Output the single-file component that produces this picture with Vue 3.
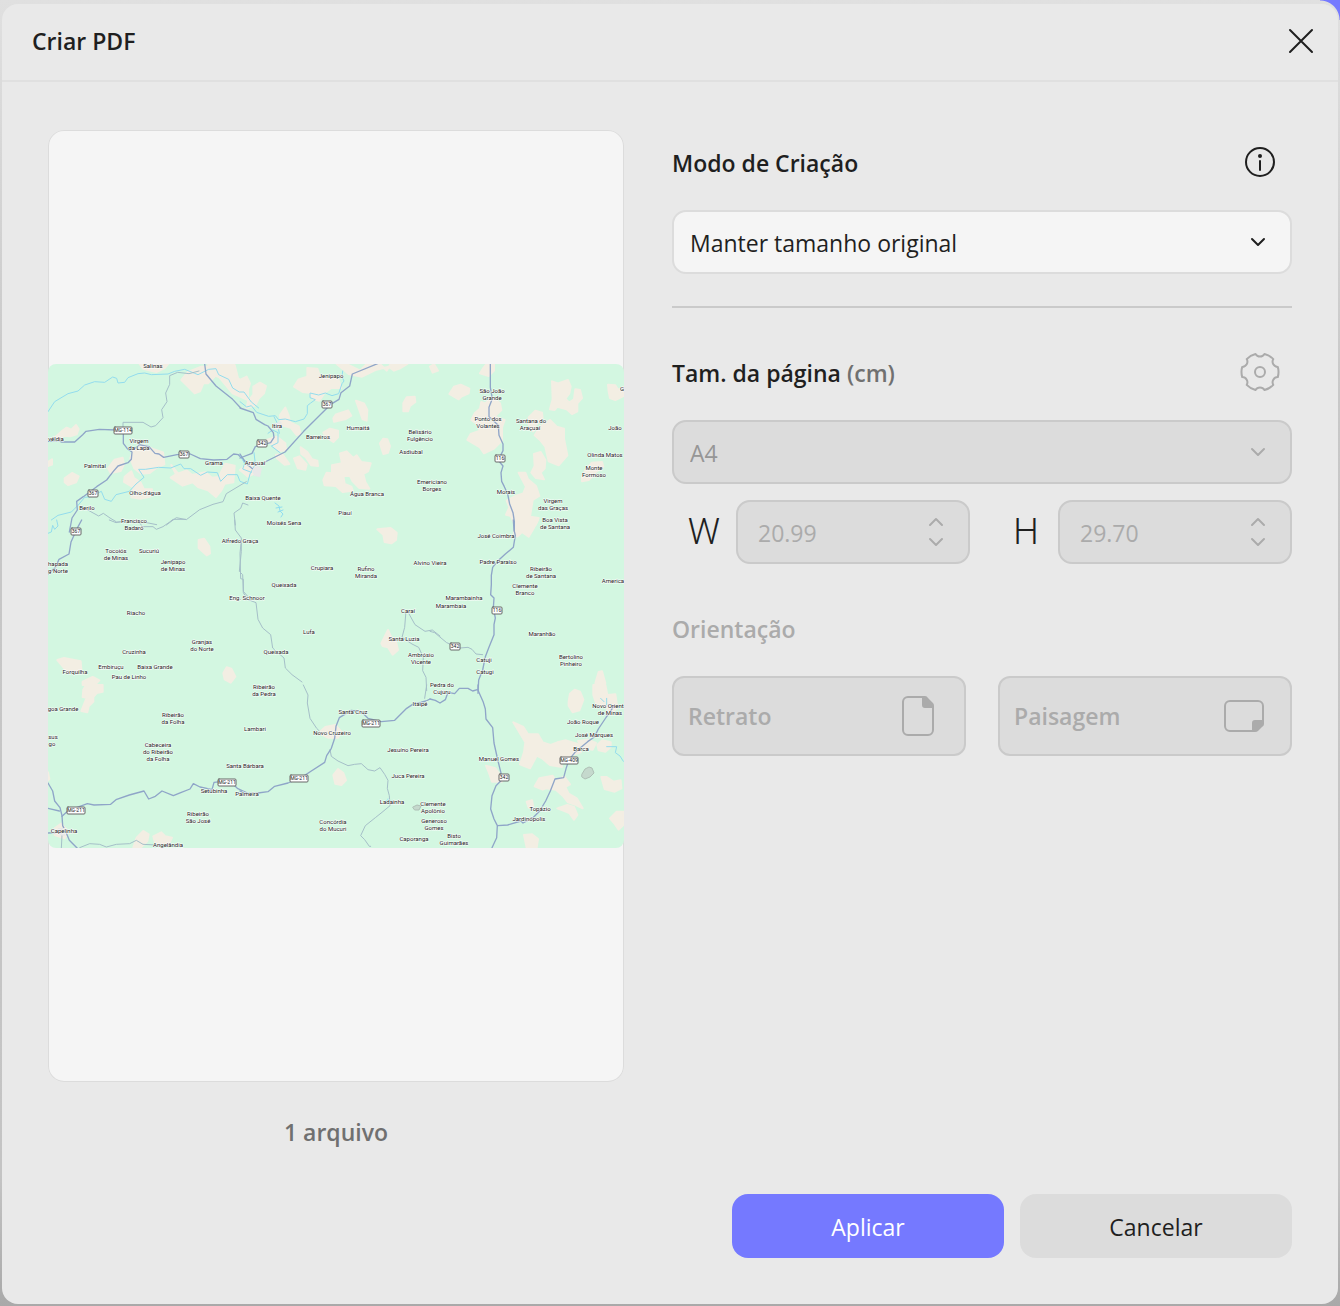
<script setup>
import { ref } from 'vue'

const mode = ref('original')
const pageSize = ref('a4')
const width = ref('20.99')
const height = ref('29.70')

// The map is stored as survey tiles drawn at three units per map pixel.
const tiles = [
  {
    x: 48, y: 360,
    land: [
      'M275 12l10 14 40 10 25-12 10-12z',
      'M400 60l20-24 40-16 20 0 20 30-20 20-14 0-10 24-16 6-20-20z',
      'M480 12l10 30 24 10 40 48 46 20 0-45-30-20-10-40z',
      'M40 215l16-12 14 6 14-14 8 12-6 16-20 6-20-2-10 12-14-8z',
      'M50 355l22-16 20 10-8 18-24 8-10-8z',
      'M255 270l30-15 30 12 30 10 4 36-20 8-24 18-26 2-20-16-12-30z',
      'M180 325l20-26 24-6 4 20-10 20-30 6z',
      'M230 350l20-16 8 20 20 14 10 20 24 0-6 22-30 6-26-4 6-30-28-16z',
      'M370 315l20 26 26-10 16 14 40-8 20 16 20-2 20-40 28 6-4 50-26 4-10 20-16 20-24-20-30-10-16-14-30 10-36-24 16-10z',
      'M0 306l12-8 0 16-12 4z'
    ],
    river: ['M0 155l20-30 40-24 30-8 20-18 30-10 30 2 24-16 12 4 4 14 20-2 10-14 30-12 20-2 20 5 50-2 20-8 30-6 30 12 10 4 32-16 22-2 8 18 30 14 12 26 20 12 14 0 22 30 22 18', 'M10 480l20-14 40-10 20-20 20-24 20-2 30-16 10 24 20 6 14-20 40-10 20-22 24-20-16-24 20 0 40-6 36 2 30-12 10 14 20 0 30 20 20-10 30 2 10 26 20-20 30 0 8 20 22 8 8-30 16-30-4-34'],
    road: ['M0 244l30-2 10 4 40 0 24-22 10-10 40-6 50 2 22 0 0 40 12 16 14 10-2 22-10 10-30 10-14 16-20 26-30 20-40 30-20 14 2 26-16 24-8 42', 'M245 262l20 2 8-10 30 6 18 20 12 2 14 10 40-8 40-2 30 14 40 4 40-2 20-16 14 2 20 20', 'M470 12l4 30 30 36 50 40 24 26'],
    minor: ['M225 205l0-18 60 0 24 14 14-4 22-24-4-24 16-24-4-26 12-26 0-26 24-10 34 4 30-8', 'M112 446l40 22 14-8 20 14 20 12 80 0 40 8', 'M355 495l30-22 30 6 40-30 40-16 30-8 10-24 60-36', 'M600 435l-16-6-6 16-20 14 4 36']
  },
  {
    x: 240, y: 360,
    land: [
      'M0 60l20-10 10 20-10 30-20 8z',
      'M40 80l20-12 18 10-6 22-16 16-10 20-26 8 4-20 16-20z',
      'M162 80l14-22 26-8 0-26 30 2 8 24 30 0 24 4 10 30-30 0-20 14-16 24-18-4-12-20-20-2z',
      'M280 175l8-12 36-12 10 16-16 10-36 8z',
      'M348 122l24 8 10 20-2 32-12-4-8-22z',
      'M490 130l10-18 24-2 2 16-16 12-6 16-14 0z',
      'M120 165l16-22 10 24 4 20 26 12 6 22-12 4-18-22-30-8z',
      'M250 218l20-12 24 6 0 20-14 14-20-14z',
      'M420 250l10-14 12 2 8 20-6 20-14 4z',
      'M182 262l20 14 14 22 16 4 2 16-20-2-16-24-14-10z',
      'M162 295l16-6 22 24-4 16-22-4z',
      'M250 360l10-22 16 2 0-24 30-6-6-30 20-6 20 20 10-8 14 20 28 4-8 24-14 8 6 24 12 20-30-2-20-20-8-16-20 0 4 24 20 8 4 12-30 4-20-18-34-2z',
      'M0 330l30-24 22 10-8 24-20 10z',
      'M108 284l20 0 20 28-14 2-24-20z',
      'M80 240l30-10 26 20 2 20-20 4z',
      'M290 12l30 0 40 20 20-20 40 0 20 20 12-20 50 0-20 12-20 8-16-12-40 10-40 20-40-8z'
    ],
    river: ['M0 125l20 16 14-4 16 20 36 12 20-2 10 12 20-2 30 8 26-8 10-16 0-24 10-8 14-10-16-6 0-14 26 6 20-6 20 8 20-6 10-30 6-8-6-12 2-18', 'M0 285l14 26-6 16 26 10M84 220l14-10 16 8 0 30-20 10 26 20M102 170l10 20 6 30'],
    road: ['M0 144l40 14 8 20 26 16 10 4 16 20 2 14-10 16-46 12-10 20-36 14', 'M75 306l60-30 56-62 80-80 26-16 6-20 26-20 8-36 78-32', 'M0 282l20 30 22 18']
  },
  {
    x: 430, y: 360,
    land: [
      'M58 102l14-22 20-6 26 12-2 14-22 10-8 8z',
      'M150 40l10-16 10-12 22 0 0 20-16 16z',
      'M166 130l20-20 24 20 4 20-20 20 30 10-8 22 0 40-24 24-30 14-12-18-38-22 10-18 28-10-10-20-16-12 10-20 16-14 4-20z',
      'M0 20l12-8 12 20-16 6z',
      'M366 64l18 6 30-10 8 20-4 20-12 16 12 12 14-10 4-30 14 2 6 24-14 16 0 24-16 8-16-14-28-8-8 10-14-2 8-30z',
      'M534 74l22 2 8 14 16-8 0 26-24 12-16-6-4-20z',
      'M296 172l20-20 20 6 2 20-20 16-8 20-14-20z',
      'M330 200l30-20 20 20 22 6 0 30 10 50-26 30-30-12-10-44-16-20-16-14z',
      'M312 282l20-6 14 24-2 26-12 12 10 20-24-4-14-16 10-20z',
      'M266 338l20 0 8 20 24 20 10 30-20 12-8 50 26 4-10 22-60 0-14-28-14-4 10-22-8-20 30-16 20-6 8-20z',
      'M456 350l10-20 20-22 30-2 4 14-20 14-24 26-20 4z'
    ],
    road: ['M181 12l0 70 6 34-10 26 0 28 28 26 2 30 12 26 0 20-10 20 0 14 10 12-6 20 2 26 8 16 10 22 6 30 10 26 4 26 0 30'],
    minor: []
  },
  {
    x: 48, y: 520,
    land: ['M452 60l16-4 16 24 2 20-10 6-24-22z', 'M28 420l20-6 50 10 2 24-40 10z', 'M104 485l30-14 20 10-14 14-36 0z', 'M526 460l10-18 14 4 12 24-14 18-18-10z'],
    river: ['M0 40l10-4 4-20 6 12 10-10-4-18'],
    road: ['M101 0l-14 26-18 40-6 36-30 16-10 24-23 20'],
    minor: ['M184 0l20 8 26-6M265 0l20 20 30 0 10 8 20-8 20-14 10-8 38 0', 'M560 0l2 30 18 24 0 40-6 60 10 10 2 50 14 16']
  },
  {
    x: 240, y: 520,
    land: ['M412 28l40-4 18 14-2 22-14 10-20-4-4-22z', 'M424 370l20-40 10 22 12 4 8 34-16 14-14-22-16-4z'],
    minor: ['M4 60l-4 40 2 76 8 2 0 40 12 20 26 10 6 50 14 26 24 20 6 40 34 30 4 30 20 20 30 22', 'M498 272l-4 50-8 30 30 20 20 10 14 30-2 40 10 20 2 40', 'M505 278l20 36 30 20 22-4 23 18']
  },
  {
    x: 430, y: 520,
    land: ['M254 0l70 0-16 30-12 20-20-14-14 14-10-10z', 'M496 490l10-34 10-2 10 36z'],
    road: ['M250 0l2 30 4 16-6 36-24 20-22 20-16 20-4 24 0 28-2 30 10 10-2 30 6 30-4 20 0 30-16 40-10 26-8 40-12 30-2 40'],
    minor: ['M0 334l14 4 36 30 40 16 24-2 12 6 12 14 20 2']
  },
  {
    x: 48, y: 685,
    land: ['M106 14l8-14 50 0 0 20-18 4-10 12 0 14-14 14-4 18-18-4 16-40-12-2z', 'M256 488l10-30 20-20 16 10-4 20-20 20z', 'M316 454l24-12 12 12 20 4-10 20-40 0z', 'M20 430l20-14 20 24-10 20-30-10z', 'M0 262l4 20-4 4z'],
    road: ['M0 294l14 24 6 30 16 20 6 24 2 30 10 20 10 24 24 24', 'M42 394l20-18 40-14 16-6 20 4 50-2 16-14 40-14 44-12 14 24 20-8 20-16 34 14 24-10 26-10 10-16 20 10 20 4 16 4 6-22 20-2 40 10 10 10 30 14', 'M0 370l34 8M0 444l30-2 20 0'],
    minor: ['M95 488l30-12 30 2 20 8 30-8 40-2 20-10 20 12 40 2 20 6', 'M40 490l2-40']
  },
  {
    x: 240, y: 685,
    land: ['M236 144l20-18 30-6 18 20-10 18-30 0z', 'M280 270l14-18 16 12 8 22-14 14-18-4z'],
    road: ['M0 318l14 8 40-2 30-4 20-16 40-10 40-16 30-20 40-26 6-20 14-22 10-30 4-36 10-26 20-12 16-10 30 4 20 20 40 10 40-4 36-36 18-12 40-10 12-6'],
    minor: ['M190 0l14 30-2 24 8 46 20 30 8 8', 'M270 194l4 20 20 14 30 14 20-4 20-2 20 18 20 4 16-10 14 20 10 18-2 24 6 22 2 30-24 20-20 16-30 24-14 30 12 12 14 20 4 0', 'M560 0l-6 40']
  },
  {
    x: 430, y: 685,
    land: [
      'M416 50l4-24 14-12 16 6 10 24-12 32-20 6-12-20z',
      'M490 0l36 0 6 30 24-2 6 40-20 20-16-24-26-4-10-30z',
      'M250 112l30 14 14 22 30 0 14 24 24 8 20-8 26-6 40 12 4 24-30 10-30 14 4 20-36-6-24-20-16-8-20 38-30-12 12-36 4-30z',
      'M168 242l28 8 14 20 6 20-30 0-8-24z',
      'M314 304l14-24 40-8 10 16 24-14 18 24-14 8 10 20 24 14 18 30-20-10-24-8-16-20-20-18-30-4-10 4z',
      'M382 370l30-10 20 6 10 24-10 14-14-20-20-8z',
      'M514 276l16 0 20 14 22-4 2 24-20 10-30-8z',
      'M540 400l20-20 20 0 0 40-14 14-14-20z',
      'M282 450l24-2 18 14-4 26-30 0z',
      'M444 168l30-4 24 10-10 20-28-4z',
      'M502 180l14-14 26 6 0 14-16 14-20-4z',
      'M290 350l16-4 4 20-14 2z'
    ],
    river: ['M512 40l10 10M530 185l30 0-4 18 14 10 10 16M530 40l0 20'],
    road: ['M144 0l0 16 16 36 6 20 2 30 20 26 4 46 12 54 10 40 4 14-20 20-12 30-4 40 10 30 10 20-2 36-14 30', 'M203 422l30-2 40-12 6 6 30-16 20-20 18-30 14-30 14-36 26-4 8-30 8-24 20-24 36-30 20-14 12-24 24-36 14-20 10-14', 'M0 42l16 4 14 8 16-10 8-22 20 4 14-16 26 0 14 8 14-4'],
    minor: []
  }
]

const places = [
  [153, 368, 'Salinas'], [331, 378, 'Jenipapo'], [492, 393, 'São João'], [492, 400, 'Grande'],
  [622, 391, 'G'], [488, 421, 'Ponto dos'], [488, 428, 'Volantes'], [531, 423, 'Santana do'],
  [530, 430, 'Araçuaí'], [615, 430, 'João'], [277, 428, 'Itira'], [358, 430, 'Humaitá'],
  [420, 434, 'Belisário'], [420, 441, 'Fulgêncio'], [318, 439, 'Barreiros'], [56, 441, 'véldia'],
  [139, 443, 'Virgem'], [139, 450, 'da Lapa'], [411, 454, 'Asdiubal'], [605, 457, 'Olinda Matos'],
  [95, 468, 'Palmital'], [214, 465, 'Grama'], [255, 465, 'Araçuaí'], [594, 470, 'Monte'],
  [594, 477, 'Formoso'], [432, 484, 'Emericiano'], [432, 491, 'Borges'], [145, 495, 'Olho-d\'água'],
  [263, 500, 'Baixa Quente'], [367, 496, 'Água Branca'], [506, 494, 'Morais'], [553, 503, 'Virgem'],
  [553, 510, 'das Graças'], [87, 510, 'Berilo'], [345, 515, 'Piauí'], [284, 525, 'Moisés Sena'],
  [134, 523, 'Francisco'], [134, 530, 'Badaró'], [555, 522, 'Boa Vista'], [555, 529, 'de Santana'],
  [240, 543, 'Alfredo Graça'], [496, 538, 'José Coimbra'], [116, 553, 'Tocoiós'], [116, 560, 'de Minas'],
  [149, 553, 'Sucuriú'], [58, 566, 'hapada'], [58, 573, 'g Norte'], [173, 564, 'Jenipapo'],
  [173, 571, 'de Minas'], [322, 570, 'Crupiara'], [366, 571, 'Rufino'], [366, 578, 'Miranda'],
  [430, 565, 'Alvino Vieira'], [498, 564, 'Padre Paraíso'], [541, 571, 'Ribeirão'], [541, 578, 'de Santana'],
  [613, 583, 'America'], [284, 587, 'Queixada'], [525, 588, 'Clemente'], [525, 595, 'Branco'],
  [247, 600, 'Eng. Schnoor'], [464, 600, 'Marambainha'], [451, 608, 'Marambaia'], [136, 615, 'Riacho'],
  [408, 613, 'Caraí'], [309, 634, 'Lufa'], [404, 641, 'Santa Luzia'], [542, 636, 'Maranhão'],
  [202, 644, 'Granjas'], [202, 651, 'do Norte'], [134, 654, 'Cruzinha'], [276, 654, 'Queixada'],
  [421, 657, 'Ambrósio'], [421, 664, 'Vicente'], [484, 662, 'Catuji'], [571, 659, 'Bertolino'],
  [571, 666, 'Pinheiro'], [111, 669, 'Embiruçu'], [155, 669, 'Baixa Grande'], [75, 674, 'Forquilha'],
  [129, 679, 'Pau de Linho'], [485, 674, 'Catugi'], [264, 689, 'Ribeirão'], [264, 696, 'da Pedra'],
  [442, 687, 'Pedra do'], [442, 694, 'Cujuru'], [63, 711, 'goa Grande'], [420, 706, 'Itaipé'],
  [353, 714, 'Santa Cruz'], [173, 717, 'Ribeirão'], [173, 724, 'da Folha'], [608, 708, 'Novo Orient'],
  [610, 715, 'de Minas'], [583, 724, 'João Roque'], [255, 731, 'Lambari'], [332, 735, 'Novo Cruzeiro'],
  [594, 737, 'José Marques'], [53, 739, 'sus'], [52, 746, 'go'], [158, 747, 'Cabeceira'],
  [158, 754, 'do Ribeirão'], [158, 761, 'da Folha'], [408, 752, 'Jesuíno Pereira'], [581, 751, 'Barca'],
  [499, 761, 'Manuel Gomes'], [245, 768, 'Santa Bárbara'], [408, 778, 'Juca Pereira'], [214, 793, 'Setubinha'],
  [247, 796, 'Palmeira'], [392, 804, 'Ladainha'], [433, 806, 'Clemente'], [433, 813, 'Apolônio'],
  [540, 811, 'Topázio'], [529, 821, 'Jardinópolis'], [198, 816, 'Ribeirão'], [198, 823, 'São José'],
  [434, 823, 'Generoso'], [434, 830, 'Gomes'], [333, 824, 'Concórdia'], [333, 831, 'do Mucuri'],
  [64, 833, 'Capelinha'], [414, 841, 'Caporanga'], [454, 838, 'Bisto'], [454, 845, 'Guimarães'],
  [168, 847, 'Angelândia']
]

const shields = [
  [123, 430, 'MG-114'], [184, 454, '367'], [93, 493, '367'], [76, 531, '367'], [262, 443, '342'],
  [327, 404, '367'], [500, 458, '116'], [497, 610, '116'], [455, 646, '342'], [371, 723, 'MG-211'],
  [299, 778, 'MG-211'], [227, 782, 'MG-211'], [76, 810, 'MG-211'], [504, 777, '342'], [569, 760, 'MG-409']
]
</script>

<template>
  <main class="backdrop">
    <section class="dialog" role="dialog" aria-labelledby="dialog-title">
      <header class="head">
        <h1 id="dialog-title">Criar PDF</h1>
        <button class="icon-button close" type="button" aria-label="Fechar">
          <svg width="26" height="26" viewBox="0 0 26 26"><path d="M2 2l22 22M24 2L2 24" /></svg>
        </button>
      </header>

      <div class="content">
        <figure class="preview">
          <div class="sheet">
            <svg class="map" viewBox="48 364 576 484" role="img" aria-label="Mapa">
              <g v-for="(t, i) in tiles" :key="'l' + i" :transform="`translate(${t.x} ${t.y}) scale(${1 / 3})`">
                <path v-for="(d, j) in t.land" :key="j" class="land" :d="d" />
              </g>
              <g v-for="(t, i) in tiles" :key="'r' + i" :transform="`translate(${t.x} ${t.y}) scale(${1 / 3})`">
                <path v-for="(d, j) in t.river" :key="'w' + j" class="river" :d="d" />
                <path v-for="(d, j) in t.minor" :key="'m' + j" class="minor" :d="d" />
                <path v-for="(d, j) in t.road" :key="'d' + j" class="road" :d="d" />
              </g>
              <path class="lake" d="M275 503l4 3 1 5 3 3-2 3M276 508l6-1M278 512l5-2M388 799l0 4M386 801l6 0" />
              <path class="reserve" d="M582 774l3-5 4-2 3 1 2 5-4 4-5 2-3-2zM413 807l4-2 4 1-2 4-4 0z" />
              <path class="town" d="M252 470l4-5 6 3-2 9-6-1zM58 828l7 0 0 8-6-1zM274 424l7-3 1 7-6 2z" />
              <text v-for="([x, y, name], i) in places" :key="'p' + i" class="place" :x="x" :y="y">{{ name }}</text>
              <g v-for="([x, y, code], i) in shields" :key="'s' + i">
                <rect class="shield" :x="x - (code.length > 3 ? 9 : 5)" :y="y - 3" :width="code.length > 3 ? 18 : 10" height="7" rx="1" />
                <text class="code" :x="x" :y="y + 2">{{ code }}</text>
              </g>
            </svg>
          </div>
          <figcaption>1 arquivo</figcaption>
        </figure>

        <form class="options" @submit.prevent>
          <div class="row">
            <label class="title" for="mode">Modo de Criação</label>
            <button class="icon-button" type="button" aria-label="Informações">
              <svg width="40" height="40" viewBox="0 0 40 40">
                <circle cx="20" cy="20" r="14" /><path d="M20 19v9" /><circle class="dot" cx="20" cy="14" r="2" />
              </svg>
            </button>
          </div>
          <div class="field">
            <select id="mode" v-model="mode">
              <option value="original">Manter tamanho original</option>
            </select>
            <svg class="chevron" width="16" height="10" viewBox="0 0 16 10"><path d="M2 2l6 6 6-6" /></svg>
          </div>

          <hr />

          <div class="row">
            <label class="title" for="size">Tam. da página <span class="unit">(cm)</span></label>
            <button class="icon-button off" type="button" disabled aria-label="Configurações">
              <svg width="40" height="40" viewBox="0 0 40 40">
                <g transform="translate(20 20)">
                  <path d="M17.8-5.1A18.5 18.5 0 0 1 17.8 5.1A5.2 5.2 0 0 0 13.3 12.9A18.5 18.5 0 0 1 4.5 18A5.2 5.2 0 0 0-4.5 18A18.5 18.5 0 0 1-13.3 12.9A5.2 5.2 0 0 0-17.8 5.1A18.5 18.5 0 0 1-17.8-5.1A5.2 5.2 0 0 0-13.3-12.9A18.5 18.5 0 0 1-4.5-18A5.2 5.2 0 0 0 4.5-18A18.5 18.5 0 0 1 13.3-12.9A5.2 5.2 0 0 0 17.8-5.1z" />
                  <circle r="5" />
                </g>
              </svg>
            </button>
          </div>
          <div class="field off">
            <select id="size" v-model="pageSize" disabled>
              <option value="a4">A4</option>
            </select>
            <svg class="chevron" width="16" height="10" viewBox="0 0 16 10"><path d="M2 2l6 6 6-6" /></svg>
          </div>
          <div class="dimensions">
            <div class="dimension">
              <label for="width">W</label>
              <div class="field off">
                <input id="width" v-model="width" type="text" inputmode="decimal" disabled />
                <svg class="chevron" width="16" height="32" viewBox="0 0 16 32"><path d="M2 9l6-6 6 6M2 23l6 6 6-6" /></svg>
              </div>
            </div>
            <div class="dimension">
              <label for="height">H</label>
              <div class="field off">
                <input id="height" v-model="height" type="text" inputmode="decimal" disabled />
                <svg class="chevron" width="16" height="32" viewBox="0 0 16 32"><path d="M2 9l6-6 6 6M2 23l6 6 6-6" /></svg>
              </div>
            </div>
          </div>

          <div class="row orientation-title"><h2 class="title">Orientação</h2></div>
          <div class="orientation">
            <button type="button" disabled>
              Retrato
              <svg width="40" height="40" viewBox="0 0 40 40">
                <path d="M25 1H10a5 5 0 0 0-5 5v28a5 5 0 0 0 5 5h20a5 5 0 0 0 5-5V12" />
                <path class="fold" d="M24 0h3q2 0 3 2l5 5q1 1 1 3v2h-9q-3 0-3-3z" />
              </svg>
            </button>
            <button type="button" disabled>
              Paisagem
              <svg width="40" height="40" viewBox="0 0 40 40">
                <path d="M29 35H6a5 5 0 0 1-5-5V10a5 5 0 0 1 5-5h28a5 5 0 0 1 5 5v15" />
                <path class="fold" d="M40 24v4q0 2-2 3l-4 4q-1 1-3 1h-3v-9q0-3 3-3z" />
              </svg>
            </button>
          </div>
        </form>
      </div>

      <footer class="actions">
        <button class="primary" type="button">Aplicar</button>
        <button type="button">Cancelar</button>
      </footer>
    </section>
  </main>
</template>

<style>
body {
  margin: 0;
}
</style>

<style scoped>
* {
  box-sizing: border-box;
}

.backdrop {
  padding: 4px 2px 2px;
  background:
    radial-gradient(circle at 0 100%, transparent 19px, #7579ff 20px) top right / 20px 20px no-repeat,
    linear-gradient(#e0e0e0, #c8c8c8 30%, #c4c4c4 90%, #a9a9a9);
  font-family: "Open Sans", "Noto Sans", sans-serif;
  font-size: 23px;
  line-height: 32px;
  color: #1f1f1f;
}

.dialog {
  background: #e9e9e9;
  border-radius: 16px;
}

.head {
  display: flex;
  align-items: center;
  justify-content: space-between;
  height: 78px;
  padding: 0 24px 2px 30px;
  border-bottom: 2px solid #e0e0e0;
}

h1,
h2 {
  margin: 0;
  font-size: 23px;
  font-weight: 600;
}

button,
select,
input {
  font: inherit;
  color: inherit;
}

.icon-button {
  display: block;
  padding: 0;
  border: 0;
  background: none;
}

svg {
  display: block;
  flex: none;
  fill: none;
  stroke: currentColor;
  stroke-width: 2;
  stroke-linecap: round;
  stroke-linejoin: round;
}

.content {
  display: grid;
  grid-template-columns: 576fr 620fr;
  gap: 48px;
  padding: 48px 46px 0;
}

.preview {
  margin: 0;
}

.sheet {
  display: flex;
  align-items: center;
  aspect-ratio: 576 / 952;
  background: #f5f5f5;
  border-radius: 16px;
  box-shadow: inset 0 0 0 1px #dcdcdc;
}

.map {
  width: 100%;
  border-radius: 8px;
  background: #d3f7e1;
  overflow: hidden;
}

.land {
  fill: #f3eee3;
  stroke: #f3eee3;
  stroke-width: 6;
}

.river {
  stroke: #93dced;
  stroke-width: 3;
}

.minor {
  stroke: #a5bfc8;
  stroke-width: 3;
}

.road {
  stroke: #8fa5c8;
  stroke-width: 4;
}

.lake {
  stroke: #8fdcef;
  stroke-width: 1;
}

.reserve {
  fill: #c5d9cd;
  stroke: #aebfb5;
  stroke-width: 1;
}

.town {
  fill: #e8e8e8;
  stroke: none;
}

.place,
.code {
  font-family: Roboto, sans-serif;
  font-size: 6px;
  text-anchor: middle;
  fill: #222;
  stroke: #fff;
  stroke-width: 1;
  paint-order: stroke;
}

.code {
  font-size: 5px;
  stroke: none;
}

.shield {
  fill: #fff;
  stroke: #666;
  stroke-width: 1;
}

figcaption {
  margin-top: 34px;
  text-align: center;
  font-weight: 600;
  color: #707070;
}

.row {
  display: flex;
  align-items: center;
  justify-content: space-between;
  height: 64px;
  padding-right: 12px;
  margin-bottom: 16px;
}

.title {
  padding-top: 2px;
  font-weight: 600;
}

.unit {
  color: #707070;
}

.dot {
  fill: currentColor;
  stroke: none;
}

.icon-button.off {
  color: #ababab;
}

.field {
  display: grid;
  align-items: center;
}

.field > * {
  grid-area: 1 / 1;
}

select,
input {
  width: 100%;
  min-width: 0;
  height: 64px;
  padding: 2px 16px 0;
  border: 2px solid #dcdcdc;
  border-radius: 14px;
  background: #f5f5f5;
  appearance: none;
  opacity: 1;
}

input {
  padding: 2px 20px 0;
}

.chevron {
  justify-self: end;
  margin-right: 26px;
  pointer-events: none;
}

.off select,
.off input {
  background: #dcdcdc;
  border-color: #cacaca;
  color: #ababab;
}

.off select {
  color: #969696;
}

.off .chevron {
  color: #ababab;
}

hr {
  height: 2px;
  margin: 32px 0;
  border: 0;
  background: #cacaca;
}

.dimensions {
  display: grid;
  grid-template-columns: 1fr 1fr;
  gap: 24px;
  margin-top: 16px;
}

.dimension {
  display: grid;
  grid-template-columns: 64px 1fr;
  align-items: center;
}

.dimension label {
  text-align: center;
  font-family: Roboto, sans-serif;
  font-size: 36px;
  font-weight: 300;
}

.orientation-title {
  margin-top: 32px;
  color: #ababab;
}

.orientation {
  display: grid;
  grid-template-columns: 1fr 1fr;
  gap: 32px;
}

.orientation button {
  display: flex;
  align-items: center;
  justify-content: space-between;
  height: 80px;
  padding: 0 26px 0 14px;
  border: 2px solid #cacaca;
  border-radius: 12px;
  background: #dcdcdc;
  color: #ababab;
  font-weight: 600;
}

.fold {
  fill: currentColor;
  stroke: none;
}

.actions {
  display: flex;
  justify-content: flex-end;
  gap: 16px;
  padding: 46px 46px;
}

.actions button {
  width: 272px;
  height: 64px;
  padding: 2px 0 0;
  border: 0;
  border-radius: 16px;
  background: #dcdcdc;
}

.actions .primary {
  background: #7579ff;
  color: #fff;
}
</style>
